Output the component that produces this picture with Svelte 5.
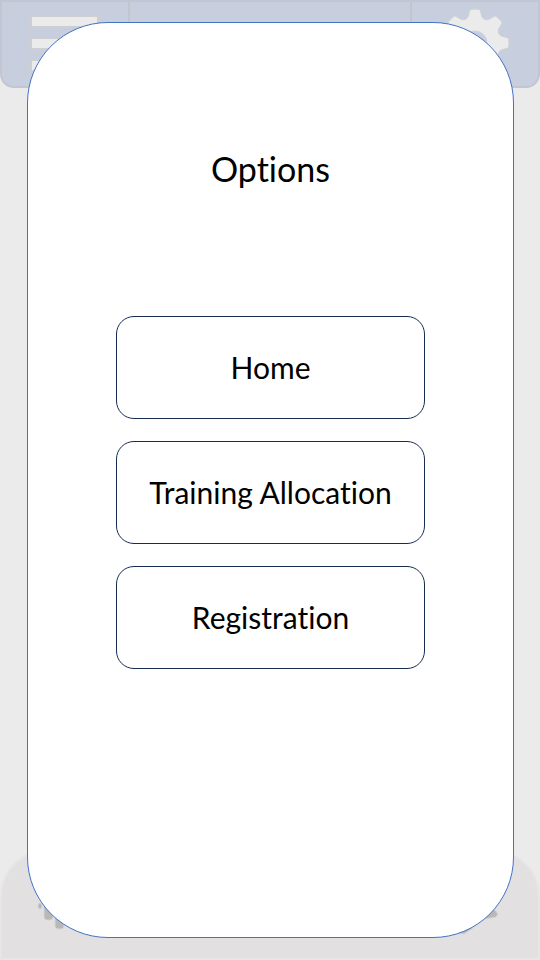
<script>
  const options = ['Home', 'Training Allocation', 'Registration'];

  // Eight-toothed cog centred on the origin
  const polar = (radius, degrees) => {
    const angle = (degrees * Math.PI) / 180;
    return `${(radius * Math.cos(angle)).toFixed(2)} ${(radius * Math.sin(angle)).toFixed(2)}`;
  };
  const cog = Array.from({ length: 8 }, (_, i) => {
    const a = i * 45;
    return `${i ? 'L' : 'M'}${polar(27, a - 15)}L${polar(33, a - 9)}Q${polar(34, a - 8)} ${polar(34, a - 5)}L${polar(34, a + 5)}Q${polar(34, a + 8)} ${polar(33, a + 9)}L${polar(27, a + 15)}Q${polar(24, a + 22)} ${polar(27, a + 30)}`;
  }).join('') + 'ZM12 0A12 12 0 1 0 -12 0A12 12 0 1 0 12 0Z';
</script>

<div class="screen">
  <header class="topbar" aria-hidden="true">
    <div class="cell side">
      <svg class="menu" width="72" height="60" viewBox="0 0 72 60">
        <rect x="2" y="1" width="67" height="11" />
        <rect x="2" y="23" width="67" height="11" />
        <rect x="2" y="45" width="67" height="11" />
      </svg>
    </div>
    <div class="cell middle"></div>
    <div class="cell side">
      <svg class="cog" width="70" height="70" viewBox="-35 -35 70 70">
        <path fill-rule="evenodd" d={cog} />
      </svg>
    </div>
  </header>

  <footer class="bottombar" aria-hidden="true">
    <svg width="60" height="60" viewBox="0 0 60 60">
      <ellipse cx="4" cy="31" rx="2" ry="3" />
      <rect x="8" y="12" width="9" height="33" rx="3" />
      <rect x="19" y="5" width="9" height="49" rx="3" />
      <rect x="31" y="12" width="8" height="33" rx="3" />
    </svg>
    <svg width="60" height="60" viewBox="0 0 60 60">
      <path d="M49 34L57 35L60 39L58 42L48 44L40 40Z" />
      <path d="M28 49L35 53L26 59L16 58L12 55Z" />
    </svg>
  </footer>

  <main class="dialog" role="dialog" aria-labelledby="dialog-title">
    <h1 id="dialog-title">Options</h1>
    <nav>
      {#each options as option}
        <button type="button">{option}</button>
      {/each}
    </nav>
  </main>
</div>

<style>
  :global(body) {
    margin: 0;
  }

  .screen {
    position: relative;
    display: flex;
    flex-direction: column;
    justify-content: space-between;
    box-sizing: border-box;
    min-height: 100vh;
    background: #ebebeb;
    font-family: Lato, "Liberation Sans", sans-serif;
    font-variant-ligatures: none;
    color: #000;
  }

  .topbar {
    display: flex;
    box-sizing: border-box;
    height: 88px;
    overflow: hidden;
    border: 2px solid #c2c6d2;
    border-radius: 0 0 14px 14px;
    background: #c7cede;
  }

  .cell {
    box-sizing: border-box;
  }

  .side {
    width: 126px;
    display: flex;
    justify-content: center;
    align-items: flex-start;
    padding-top: 6px;
  }

  .middle {
    flex: 1;
    border: solid #c1c5d0;
    border-width: 0 2px;
  }

  .menu {
    margin-top: 7px;
    fill: #ebebeb;
    stroke: #cfcfd2;
    stroke-width: 2;
  }

  .cog {
    fill: #ebebeb;
    stroke: #d2d2d4;
    stroke-width: 1;
  }

  .bottombar {
    display: flex;
    justify-content: space-between;
    align-items: flex-start;
    box-sizing: border-box;
    height: 110px;
    padding: 23px 40px 0 34px;
    border: 2px solid #e6e6e6;
    border-radius: 46px 46px 0 0;
    background: #e2e0e1;
  }

  .bottombar svg {
    fill: #b8b8b8;
    stroke: #d6d5d5;
    stroke-width: 1;
  }

  .dialog {
    position: absolute;
    inset: 22px 26px 22px 27px;
    display: flex;
    flex-direction: column;
    align-items: center;
    box-sizing: border-box;
    padding: 124px 24px 24px;
    border: 1px solid #4472c4;
    border-radius: 81px;
    background: #fff;
  }

  h1 {
    margin: 0 0 125px;
    font-size: 34px;
    line-height: 44px;
    font-weight: 400;
  }

  nav {
    display: flex;
    flex-direction: column;
    gap: 22px;
    width: 100%;
    max-width: 309px;
  }

  button {
    height: 103px;
    padding: 0 16px 2px;
    border: 1px solid #172c51;
    border-radius: 18px;
    background: #fff;
    color: inherit;
    font-family: inherit;
    font-size: 30px;
    line-height: 36px;
    font-variant-ligatures: none;
    cursor: pointer;
  }
</style>
